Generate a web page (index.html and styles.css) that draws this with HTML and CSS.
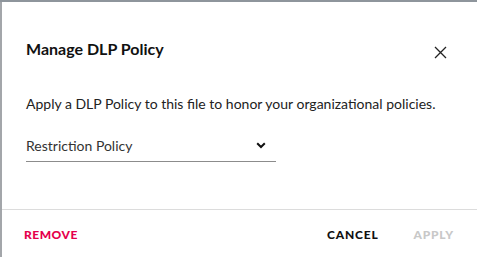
FILE: index.html
```html
<!DOCTYPE html>
<html>
<head>
<meta charset="utf-8">
<link rel="stylesheet" href="styles.css">
</head>
<body>
<div class="dialog">
  <div class="header">
    <h1 class="title">Manage DLP Policy</h1>
    <button class="close" aria-label="Close">
      <svg width="13" height="13" viewBox="0 0 13 13"><path d="M1 1L12 12M12 1L1 12" stroke="#222" stroke-width="1.3" fill="none"/></svg>
    </button>
  </div>
  <div class="content">
    <p class="desc">Apply a DLP Policy to this file to honor your organizational policies.</p>
    <div class="select">
      <span class="select-value">Restriction Policy</span>
      <svg class="chev" width="10" height="7" viewBox="0 0 10 7"><path d="M1.2 1.2L5 5L8.8 1.2" stroke="#111" stroke-width="2" fill="none"/></svg>
    </div>
  </div>
  <div class="footer">
    <button class="btn remove">REMOVE</button>
    <div class="spacer"></div>
    <button class="btn cancel">CANCEL</button>
    <button class="btn apply">APPLY</button>
  </div>
</div>
</body>
</html>
```
FILE: styles.css
```css
html, body {
  margin: 0;
  padding: 0;
}
body {
  background: #a3a6aa;
  border-top: 2px solid #8e959c;
  box-sizing: border-box;
  height: 257px;
  overflow: hidden;
  font-family: "Lato", sans-serif;
}
.dialog {
  margin-left: 2px;
  background: #fff;
  height: 255px;
  display: flex;
  flex-direction: column;
}
.header {
  display: flex;
  align-items: flex-start;
  justify-content: space-between;
  padding: 37px 30px 0 24px;
}
.title {
  margin: 0;
  font-size: 16px;
  line-height: 19px;
  font-weight: 700;
  color: #111;
}
.close {
  border: 0;
  background: none;
  padding: 0;
  margin-top: 7px;
  width: 13px;
  height: 13px;
  display: flex;
}
.content {
  padding: 0 24px;
  flex: 1;
}
.desc {
  margin: 36px 0 0 0;
  font-size: 14px;
  line-height: 17px;
  color: #222;
  white-space: nowrap;
}
.select {
  margin-top: 25px;
  width: 250px;
  box-sizing: border-box;
  border-bottom: 1px solid #8c8c8c;
  display: flex;
  align-items: center;
  justify-content: space-between;
  padding: 0 10px 7px 0;
}
.select-value {
  font-size: 14px;
  line-height: 17px;
  color: #333;
}
.footer {
  border-top: 1px solid #dcdcdc;
  display: flex;
  align-items: center;
  padding: 2px 23px 0 22px;
  box-sizing: border-box;
  flex: 0 0 48px;
}
.spacer { flex: 1; }
.btn {
  border: 0;
  background: none;
  padding: 0;
  font-family: "Lato", sans-serif;
  font-size: 12px;
  font-weight: 900;
  letter-spacing: 0.8px;
}
.remove { color: #e5004c; letter-spacing: 0.5px; }
.cancel { color: #111; margin-right: 35px; }
.apply { color: #c8c8c8; }
```
